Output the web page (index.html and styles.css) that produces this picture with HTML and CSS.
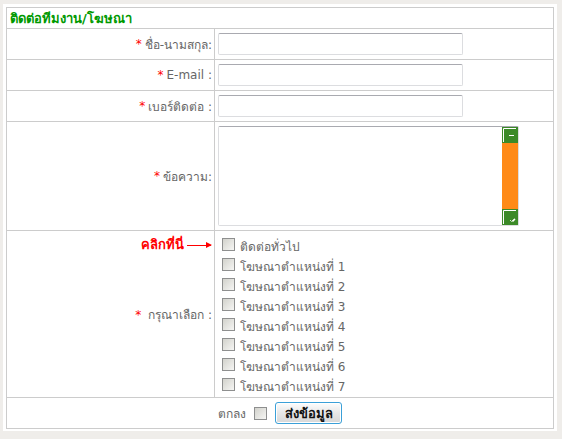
FILE: index.html
```html
<!DOCTYPE html>
<html lang="th">
<head>
<meta charset="utf-8">
<title>ติดต่อทีมงาน/โฆษณา</title>
<link rel="stylesheet" href="styles.css">
</head>
<body>
<div class="box">
  <form class="form">
    <div class="title">ติดต่อทีมงาน/โฆษณา</div>

    <div class="lbl"><b class="req">*</b> ชื่อ-นามสกุล:</div>
    <div class="fld"><input type="text" class="txt"></div>

    <div class="lbl"><b class="req">*</b> E-mail :</div>
    <div class="fld"><input type="text" class="txt"></div>

    <div class="lbl"><b class="req">*</b> เบอร์ติดต่อ :</div>
    <div class="fld"><input type="text" class="txt"></div>

    <div class="lbl"><b class="req">*</b> ข้อความ:</div>
    <div class="fld top">
      <div class="msg">
        <textarea></textarea>
        <div class="sbar">
          <div class="sbtn">
            <svg width="16" height="16" viewBox="0 0 16 16"><path d="M1.5 15V1.5H14" fill="none" stroke="#fff"/><path d="M7 8.5h5" stroke="#fff"/></svg>
          </div>
          <div class="track"></div>
          <div class="sbtn">
            <svg width="16" height="16" viewBox="0 0 16 16"><path d="M1.5 15V1.5H14" fill="none" stroke="#fff"/><path d="M8 11l1.5 1.5L12.5 10" fill="none" stroke="#cfe8c4"/><path d="M10.5 12.5l2.5-2.5" stroke="#fff" stroke-width="1.5"/></svg>
          </div>
        </div>
      </div>
    </div>

    <div class="lbl stack">
      <div class="hint">คลิกที่นี่ <span class="arrow"></span></div>
      <div class="mid"><b class="req">*</b> กรุณาเลือก :</div>
    </div>
    <div class="fld list">
      <label class="opt"><input type="checkbox" class="chk"> ติดต่อทั่วไป</label>
      <label class="opt"><input type="checkbox" class="chk"> โฆษณาตำแหน่งที่ 1</label>
      <label class="opt"><input type="checkbox" class="chk"> โฆษณาตำแหน่งที่ 2</label>
      <label class="opt"><input type="checkbox" class="chk"> โฆษณาตำแหน่งที่ 3</label>
      <label class="opt"><input type="checkbox" class="chk"> โฆษณาตำแหน่งที่ 4</label>
      <label class="opt"><input type="checkbox" class="chk"> โฆษณาตำแหน่งที่ 5</label>
      <label class="opt"><input type="checkbox" class="chk"> โฆษณาตำแหน่งที่ 6</label>
      <label class="opt"><input type="checkbox" class="chk"> โฆษณาตำแหน่งที่ 7</label>
    </div>

    <div class="foot">
      <span class="agree">ตกลง</span>
      <input type="checkbox" class="chk">
      <button type="button" class="send">ส่งข้อมูล</button>
    </div>
  </form>
</div>
</body>
</html>
```

FILE: styles.css
```css
body {
  margin: 0; background-color: #efedea;
  font-family: Tahoma, "DejaVu Sans", "Noto Sans", sans-serif;
  font-size: 12px; color: #666;
}

.box {
  width: 548px; margin: 4px 0 0 3px;
  padding: 3px 3px 2px 3px; background-color: #fff;
}

.form {
  display: grid; gap: 1px; padding: 1px;
  grid-template-columns: 207px 338px;
  grid-template-rows: 20px 30px 30px 30px 108px 166px 30px;
  background-color: #ccc;
}

.form > div { background-color: #fff; }

.title {
  grid-column: 1 / 3; padding: 0 3px;
  font-weight: bold; font-size: 13px; color: #009900;
  display: flex; align-items: center;
}

.lbl {
  display: flex; align-items: center; justify-content: flex-end;
  padding-right: 2px; white-space: nowrap;
}

.req { color: #f00; font-weight: normal; margin-right: 3px; }

.fld { display: flex; align-items: center; padding-left: 3px; }
.fld.top { align-items: flex-start; padding-top: 4px; }

.txt {
  width: 245px; height: 22px; box-sizing: border-box; margin: 0;
  border: 1px solid #dcdde0; border-top-color: #a9aab0;
  border-radius: 2px; outline: none; padding: 0 3px;
  font: inherit; color: #333;
}

.msg {
  display: flex; width: 301px; height: 100px; box-sizing: border-box;
  border: 1px solid #dcdde0; border-top-color: #a9aab0; border-radius: 2px;
}

.msg textarea {
  flex: 1; border: none; outline: none; resize: none; margin: 0;
  padding: 2px; font: inherit;
}

.sbar { width: 16px; display: flex; flex-direction: column; }
.sbtn { height: 16px; background-color: #3c8a28; }
.sbtn svg { display: block; }
.track { flex: 1; background-color: #ff8a17; }

.stack { display: grid; justify-items: end; }
.stack > div { grid-area: 1 / 1; }
.mid { align-self: center; }

.hint {
  align-self: start; margin-top: 6px; padding-right: 1px;
  color: #f00; font-weight: bold; font-size: 13px;
  display: flex; align-items: center; gap: 3px; line-height: 16px;
}

.arrow {
  width: 24px; height: 1px; background-color: #f00; position: relative;
}

.arrow::after {
  content: ""; position: absolute; right: -1px; top: -3px;
  border-left: 6px solid #f00; border-top: 3.5px solid transparent;
  border-bottom: 3.5px solid transparent;
}

.list {
  flex-direction: column; align-items: flex-start;
  padding: 6px 0 0 7px; box-sizing: border-box;
}

.opt { height: 20px; display: flex; align-items: flex-start; gap: 5px; }
.opt .chk { margin-top: 1px; }

.chk {
  appearance: none; -webkit-appearance: none; margin: 0;
  width: 13px; height: 13px; box-sizing: border-box;
  border: 1px solid #8e8f8f;
  background: linear-gradient(135deg, #d2d2cc, #f6f6f4);
  flex: none;
}

.foot {
  grid-column: 1 / 3;
  display: flex; align-items: center; justify-content: center; gap: 8px;
}

.send {
  height: 22px; width: 67px; margin: 0; padding: 0;
  border: 1px solid #3ba0d8; border-radius: 3px;
  background: linear-gradient(#fdfdfd, #e7e7e7 50%, #d7d7d7);
  box-shadow: inset 0 0 0 1px #fff;
  font: bold 13px Tahoma, "DejaVu Sans", sans-serif; color: #111;
}
```
